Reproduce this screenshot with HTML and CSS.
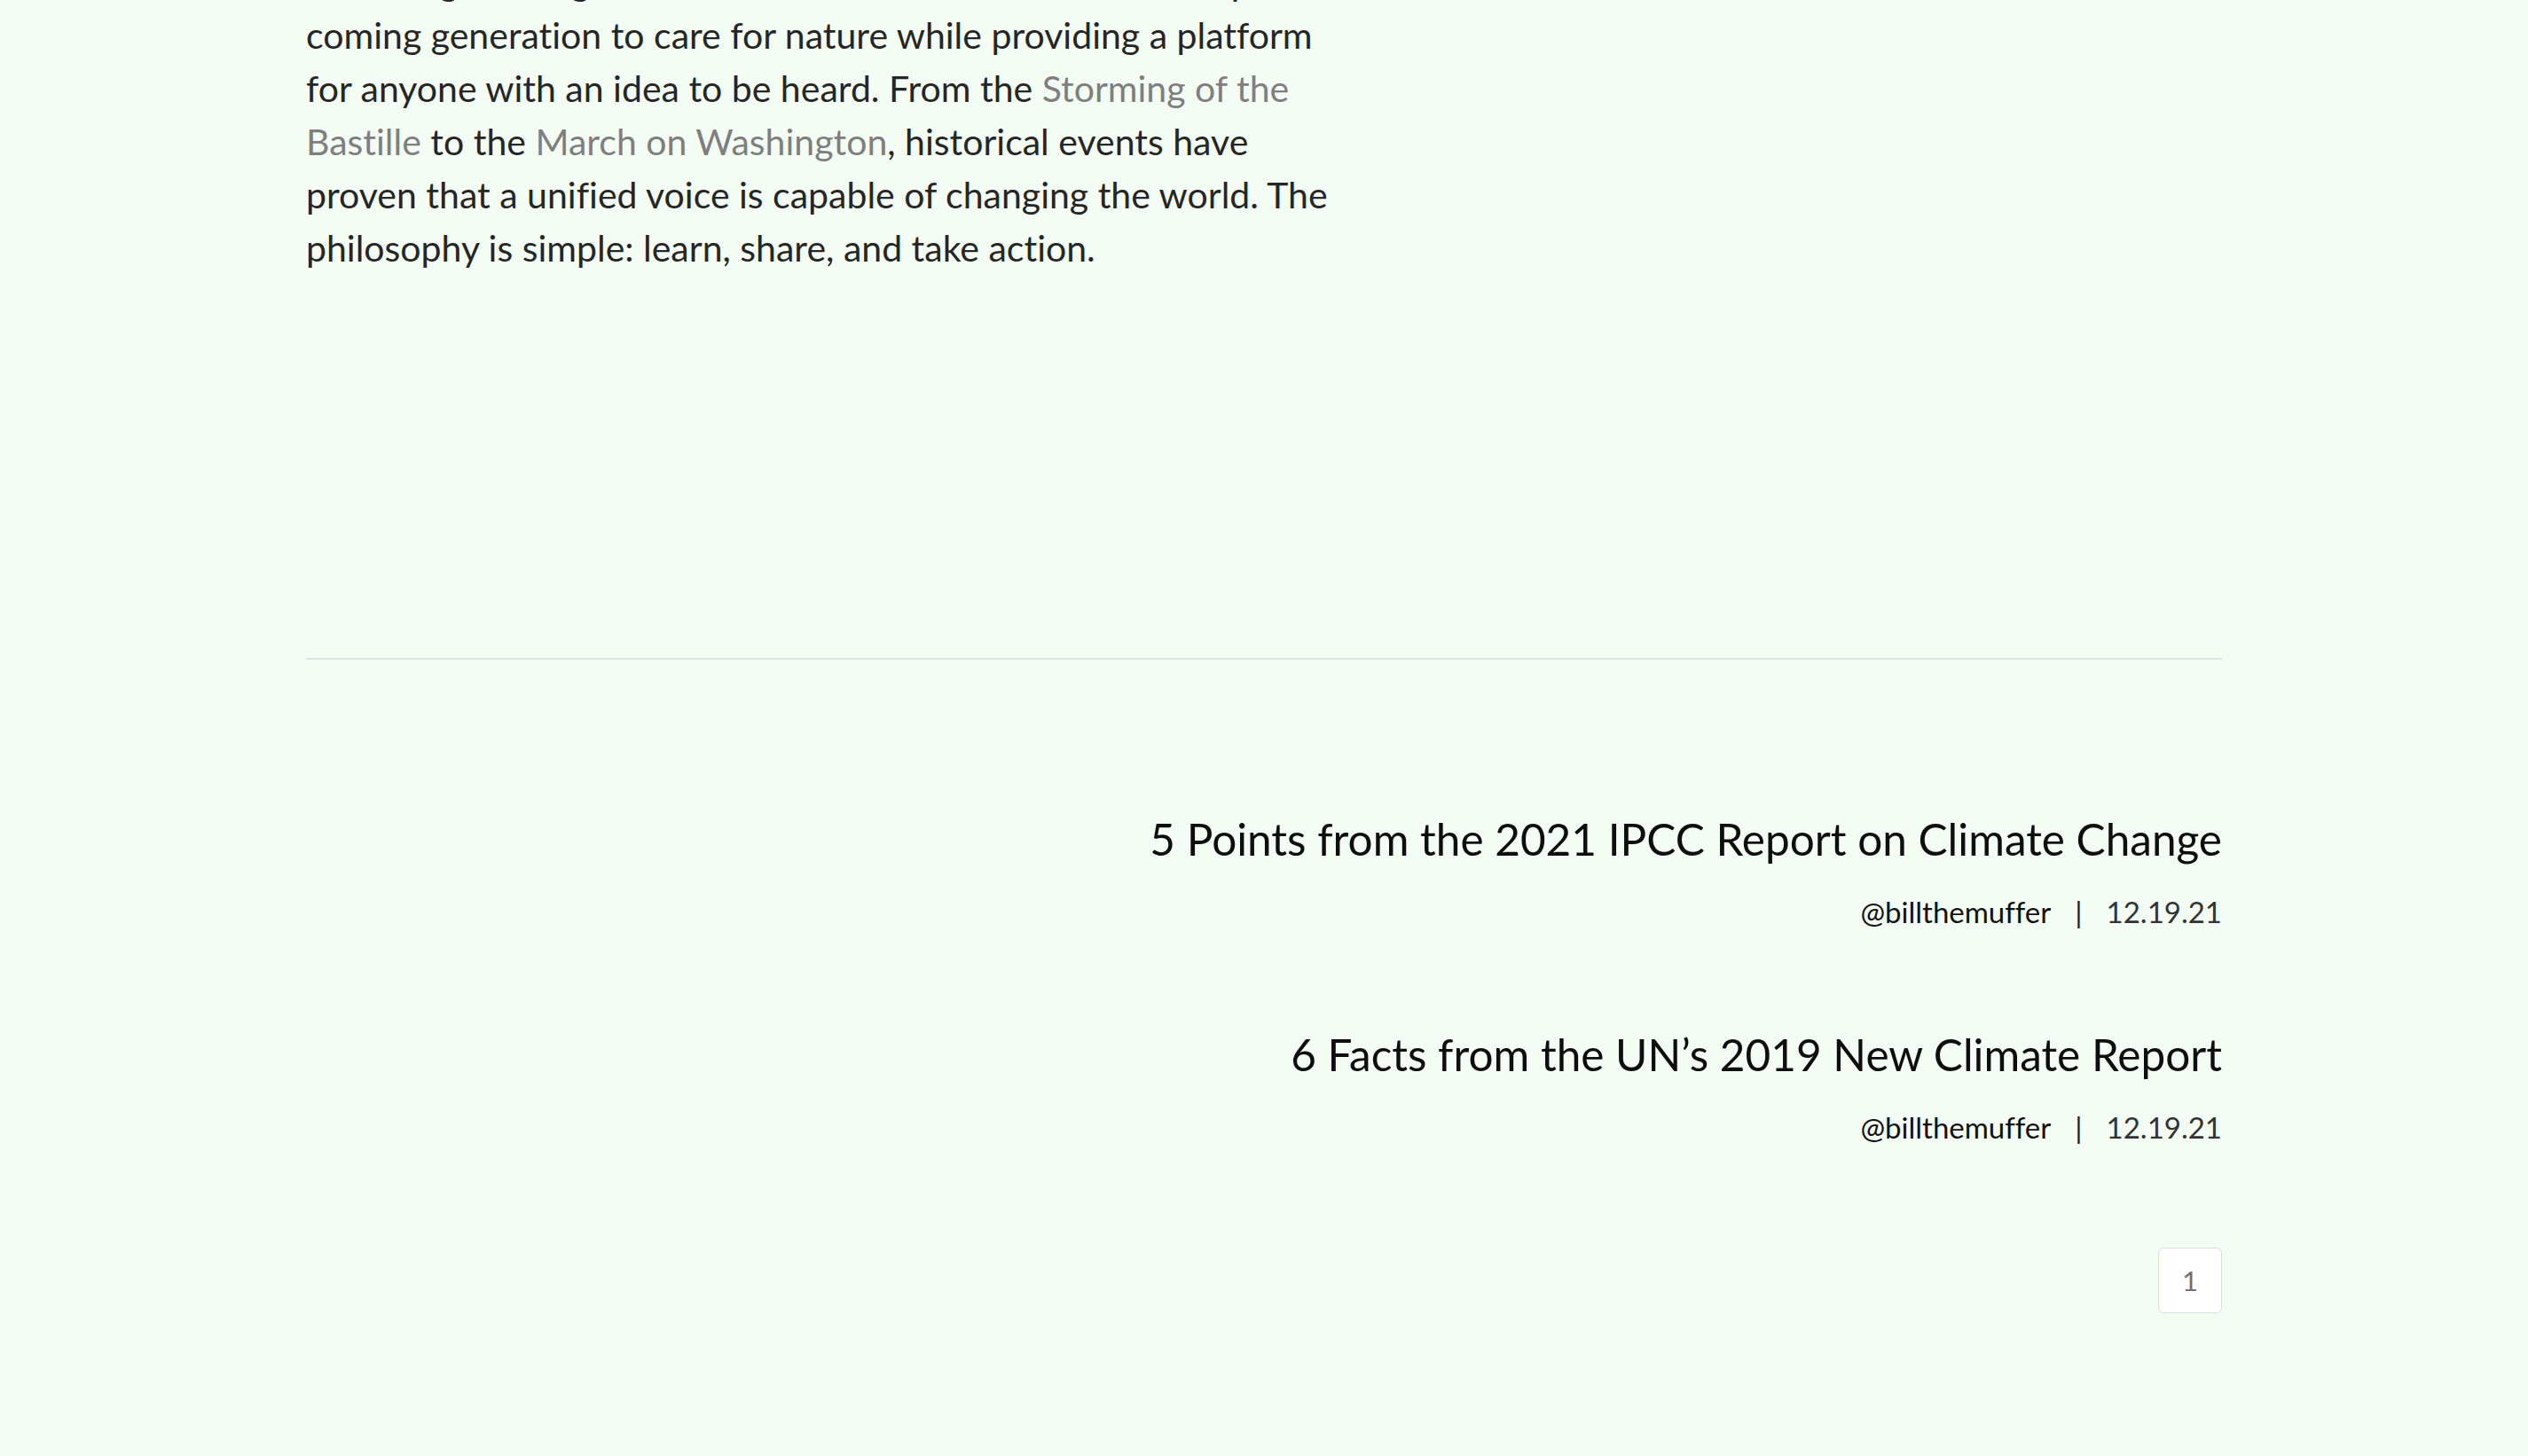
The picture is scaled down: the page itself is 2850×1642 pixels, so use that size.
FILE: index.html
```html
<!DOCTYPE html>
<html lang="en">
<head>
<meta charset="utf-8">
<title>Posts</title>
<link rel="stylesheet" href="styles.css">
</head>
<body>
<main class="container">
  <section class="intro">
    <p class="intro-text">Built on gathering and education we aim to motivate the up-coming generation to care for nature while providing a platform for anyone with an idea to be heard. From the <a class="ref" href="#">Storming of the Bastille</a> to the <a class="ref" href="#">March on Washington</a>, historical events have proven that a unified voice is capable of changing the world. The philosophy is simple: learn, share, and take action.</p>
  </section>
  <hr class="divider">
  <section class="posts">
    <article class="post">
      <h2 class="post-title">5 Points from the 2021 IPCC Report on Climate Change</h2>
      <div class="post-meta"><span class="author">@billthemuffer</span><span class="sep">|</span><span class="date">12.19.21</span></div>
    </article>
    <article class="post">
      <h2 class="post-title">6 Facts from the UN’s 2019 New Climate Report</h2>
      <div class="post-meta"><span class="author">@billthemuffer</span><span class="sep">|</span><span class="date">12.19.21</span></div>
    </article>
  </section>
  <nav class="pagination">
    <a class="page" href="#">1</a>
  </nav>
</main>
</body>
</html>
```
FILE: styles.css
```css
html, body {
  margin: 0;
  padding: 0;
}
body {
  background: #f3fdf4;
  font-family: "Lato", "Open Sans", sans-serif;
  font-variant-ligatures: none;
  color: #262626;
  overflow: hidden;
}
.container {
  width: 2160px;
  margin: 0 auto;
  display: flex;
  flex-direction: column;
}
.intro-text {
  width: 1165px;
  margin: -50px 0 0 0;
  font-size: 41px;
  line-height: 60px;
  color: #262626;
}
.ref {
  color: #7f7f7f;
  text-decoration: none;
}
.divider {
  margin: 432px 0 0 0;
  border: 0;
  height: 2px;
  background: #dce5df;
}
.posts {
  display: flex;
  flex-direction: column;
  align-items: flex-end;
  margin-top: 172px;
  gap: 111px;
}
.post {
  display: flex;
  flex-direction: column;
  align-items: flex-end;
  gap: 32px;
}
.post-title {
  margin: 0;
  font-size: 49.5px;
  line-height: 60px;
  font-weight: 400;
  color: #0e0e0e;
  text-align: right;
}
.post-meta {
  display: flex;
  font-size: 33px;
  line-height: 40px;
  color: #333;
}
.author {
  color: #111;
}
.sep {
  margin: 0 27px;
  color: #222;
}
.date {
  color: #333;
}
.pagination {
  display: flex;
  justify-content: flex-end;
  margin-top: 116px;
}
.page {
  width: 70px;
  height: 72px;
  display: flex;
  align-items: center;
  justify-content: center;
  background: #ffffff;
  border: 1px solid #dcdfe3;
  border-radius: 6px;
  color: #6b7280;
  font-size: 31px;
  text-decoration: none;
}
```
